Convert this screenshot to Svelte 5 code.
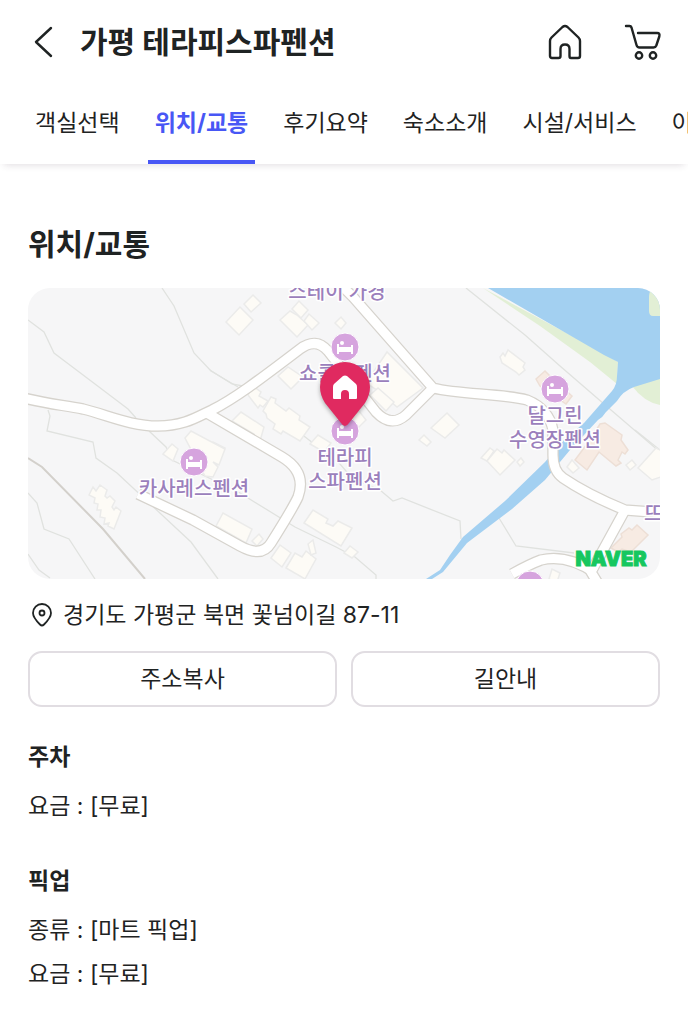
<script lang="ts">
	interface Tab {
		id: string;
		name: string;
	}

	interface Place {
		x: number;
		y: number;
		lines: string[];
	}

	const tabs: Tab[] = [
		{ id: 'rooms', name: '객실선택' },
		{ id: 'location', name: '위치/교통' },
		{ id: 'reviews', name: '후기요약' },
		{ id: 'about', name: '숙소소개' },
		{ id: 'facilities', name: '시설/서비스' },
		{ id: 'guide', name: '이용안내' }
	];

	let active = $state('location');

	const infos = [
		{ title: '주차', rows: ['요금 : [무료]'] },
		{ title: '픽업', rows: ['종류 : [마트 픽업]', '요금 : [무료]'] }
	];

	// map coordinates, see the viewBox of .map
	const places: Place[] = [
		{ x: 345, y: 347, lines: ['쇼콜라펜션'] },
		{ x: 345, y: 431, lines: ['테라피', '스파펜션'] },
		{ x: 555, y: 389, lines: ['달그린', '수영장펜션'] },
		{ x: 194, y: 462, lines: ['카사레스펜션'] },
		{ x: 530, y: 585, lines: [] }
	];

	const roads = [
		'M20 397C42 403 62 405 83 409C108 415 130 426 158 426C184 426 197 417 212 410C234 399 258 381 300 349Q316 337 328 351L376 412Q391 428 406 415L433 388',
		'M207 413L282 457Q307 472 298 497Q293 508 271 543Q262 558 240 546L193 520L138 494',
		'M336 280L353 297L433 388C462 395 500 393 527 400Q549 409 553 430V455Q553 471 563 478Q588 495 625 510L665 513',
		'M625 510L591 572L602 590',
		'M512 574Q530 564 541 560Q567 554 595 573'
	];

	const trails = [
		'M28 320L44 332L54 353L95 384L128 409L136 418',
		'M162 288L174 306L194 353L211 371L238 387',
		'M48 410L50 416L47 431L93 442L96 458L117 473L147 501L191 542L218 579',
		'M28 493L37 503L44 529L69 539L95 579',
		'M28 554L39 570L50 578',
		'M149 431L166 447L172 460L240 493L295 527L336 547L355 557L376 575V579',
		'M210 370L232 384L248 387',
		'M300 433L340 464L352 478L380 490L393 501L402 498L460 521L461 539',
		'M466 288L525 335L560 366L604 404L660 452',
		'M499 518L516 546L574 553',
		'M635 430L660 450'
	];

	const buildings = [
		'M226 322L240 307L253 320L239 335Z',
		'M244 304L253 295L261 303L251 312Z',
		'M280 320L290 311L297 315L308 325L297 337Z',
		'M292 309L299 301L308 310L301 318Z',
		'M304 321L309 314L319 323L312 330Z',
		'M335 323L341 317L346 323L341 329Z',
		'M278 376L288 367L303 377L291 389Z',
		'M366 383L387 352L423 388L397 407L377 390Z',
		'M370 395L378 388L394 402L386 411Z',
		'M350 418L359 411L366 420L358 428Z',
		'M248 395L253 386L261 392L259 396L268 401L263 407L260 405L258 408Z',
		'M263 411L271 397L276 399L275 403L286 411L289 408L300 416L299 420L310 427L300 441L283 431L281 434L273 429L275 424L267 418L266 414Z',
		'M310 444L318 435L331 443L324 452Z',
		'M232 421L241 412L264 427L260 441L253 437L254 434Z',
		'M208 450L213 442L225 448L219 458Z',
		'M431 428L447 413L459 425L445 438Z',
		'M419 440L424 435L431 442L427 446Z',
		'M500 357L503 353L505 356L508 350L525 363L523 367L525 370L519 375L516 372L502 363Z',
		'M185 438L191 431L225 449L219 465L213 462L218 467L213 477L205 476Z',
		'M163 454L172 444L178 449L173 461Z',
		'M89 495L93 487L96 491L100 485L107 490L105 496L107 498L110 496L115 501L112 507L114 510L116 507L121 511L114 529L108 526L109 523L104 524L105 518L100 517L101 510L97 510L98 504L94 503L95 498Z',
		'M216 526L223 513L252 529L246 543Z',
		'M304 523L313 510L328 519L326 523L333 526L338 521L352 528L341 546Z',
		'M252 541L259 534L263 539L257 546Z',
		'M271 558L280 545L291 553L282 567Z',
		'M286 568L295 553L302 557L306 551L316 559L305 579Z',
		'M308 544L313 540L316 553L311 555Z',
		'M344 553L350 546L358 552L352 558Z',
		'M481 458L490 448L494 451L487 461Z',
		'M487 461L497 449L502 453L504 450L515 460L500 475Z',
		'M517 462L521 458L524 462L520 466Z',
		'M567 467L572 460L579 468L573 473Z',
		'M626 465L632 460L636 465L630 470Z',
		'M638 468L656 448L664 452V476L652 480Z',
		'M549 579L552 569L560 573L557 582Z'
	];
</script>

{#snippet bed()}
	<circle r="14" fill="#d6a4de" stroke="#fff" />
	<path d="M-8 -3H-6V0H6V-2H8V7H6V5H-6V7H-8Z" fill="#fff" />
	<circle cx="-3" cy="-4" r="2" fill="#fff" />
{/snippet}

<div class="page">
	<header>
		<div class="bar">
			<button class="icon back" aria-label="뒤로">
				<svg width="20" height="34" viewBox="0 0 20 34">
					<path d="M17 3L2 17L17 31" />
				</svg>
			</button>
			<h1>가평 테라피스파펜션</h1>
			<a class="icon" href="#home" aria-label="홈">
				<svg width="34" height="36" viewBox="0 0 34 36">
					<path
						d="M3.5 13.5L14.5 3Q17 1 19.5 3L30.5 13.5Q32 15 32 17V32Q32 34 30 34H23Q21.5 34 21.5 32V25Q21.5 20.500 17 20.5Q12.5 20.5 12.5 25V32Q12.5 34 10.5 34H4Q2 34 2 32V17Q2 15 3.5 13.5Z"
					/>
				</svg>
			</a>
			<a class="icon" href="#cart" aria-label="장바구니">
				<svg width="38" height="36" viewBox="0 0 38 36">
					<path
						d="M2 2H5.5Q7 2 7.5 3.5L12.5 21Q13.2 23.500 15.5 23.5H29.5Q31.5 23.5 32.3 21.5L35.3 12.5Q36.2 9 33.2 9H14"
					/>
					<circle cx="15" cy="31.500" r="3.2" />
					<circle cx="29" cy="31.500" r="3.2" />
				</svg>
			</a>
		</div>
		<nav>
			{#each tabs as tab}
				<a
					href="#{tab.id}"
					class:active={active === tab.id}
					aria-current={active === tab.id ? 'true' : undefined}
					onclick={() => (active = tab.id)}>{tab.name}</a
				>
			{/each}
		</nav>
	</header>

	<main>
		<h2>위치/교통</h2>

		<svg class="map" viewBox="28 288 632 291" role="img" aria-label="지도">
			<rect x="28" y="288" width="632" height="291" fill="#f6f6f7" />

			<g class="trails">
				{#each trails as d}
					<path {d} />
				{/each}
			</g>
			<path
				d="M28 458L42 467L103 529L145 579"
				fill="none"
				stroke="#d3d0cb"
				stroke-width="2"
			/>

			<g class="buildings">
				{#each buildings as d}
					<path {d} />
				{/each}
			</g>
			<g class="buildings warm">
				<path d="M536 379L545 371L550 376L572 396L566 404L540 386Z" />
				<path
					d="M575 460L590 440L600 424L605 423L622 435L621 440L628 450L625 454L622 452L618 460L621 463L616 466L599 452L587 470Z"
				/>
				<path
					d="M611 548L622 537L621 534L629 528L632 530L637 525L648 535L631 552L622 549L618 552Z"
				/>
			</g>

			<path d="M483 288L598 350L618 362L617 384L590 362L540 326Z" fill="#e2efd5" />
			<path d="M632 386L660 378V405Q644 402 632 386Z" fill="#e2efd5" />
			<path
				d="M488 288H660V379L634 387Q623 391 617 401L606 412Q603 417 598 420L570 450L545 480L512 509L467 543L443 572L432 579H426L440 570L450 555L463 537L505 501L545 462L564 440L584 423L612 391Q617 385 617 376L618 362L604 355Z"
				fill="#a3d0f1"
			/>
			<path d="M653 288H660V316H653Q649 316 649 311V297Q649 291 653 288Z" fill="#e2efd5" />

			<g class="roads casing">
				{#each roads as d}
					<path {d} />
				{/each}
			</g>
			<g class="roads">
				{#each roads as d}
					<path {d} />
				{/each}
			</g>

			<text x="337" y="299">스테이 가경</text>
			<text class="start" x="644" y="521">뜨락</text>
			{#each places as place}
				<g transform="translate({place.x} {place.y})">
					{@render bed()}
					{#each place.lines as line, i}
						<text y={34 + i * 24}>{line}</text>
					{/each}
				</g>
			{/each}

			<g class="pin">
				<path
					d="M345 426Q343 426 341 423L325 403Q320 395 320 387A25 25 0 0 1 370 387Q370 395 365 403L349 423Q347 426 345 426Z"
					fill="#e02a60"
				/>
				<path
					d="M333 387Q333 385 334 384L343 376Q345 375 347 376L356 384Q357 385 357 387V398Q357 399 356 399H349V394Q349 390 345 390Q341 390 341 394V399H334Q333 399 333 398Z"
					fill="#fff"
				/>
			</g>
			<text class="naver" x="611" y="566">NAVER</text>
		</svg>

		<address>
			<svg width="20" height="24" viewBox="0 0 20 24">
				<path
					d="M10 22.5Q9 22.5 8 21.500Q1 14.5 1 10A9 9 0 0 1 19 10Q19 14.5 12 21.5Q11 22.5 10 22.5Z"
				/>
				<circle cx="10" cy="10" r="2.5" />
			</svg>
			경기도 가평군 북면 꽃넘이길 87-11
		</address>

		<div class="actions">
			<button>주소복사</button>
			<button>길안내</button>
		</div>

		{#each infos as info}
			<section>
				<h3>{info.title}</h3>
				{#each info.rows as row}
					<p>{row}</p>
				{/each}
			</section>
		{/each}
	</main>
</div>

<style>
	:global(body) {
		background: #fff;
	}

	.page {
		font-family: Inter, 'Noto Sans CJK KR', sans-serif;
		font-size: 23px;
		color: #1f2323;
		overflow-x: hidden;
	}

	h1,
	h2,
	h3,
	p {
		margin: 0;
	}

	a {
		color: inherit;
		text-decoration: none;
	}

	button {
		font: inherit;
		color: inherit;
		background: none;
		border: none;
		padding: 0;
		cursor: pointer;
	}

	header {
		background: #fff;
		box-shadow: 0 5px 7px -4px rgba(60, 40, 60, 0.16);
	}

	.bar {
		display: flex;
		align-items: center;
		gap: 42px;
		height: 80px;
		padding: 2px 26px 0 34px;
	}
	.icon {
		display: flex;
	}
	.icon svg,
	address svg {
		fill: none;
		stroke: #1f2323;
		stroke-width: 2.4;
		stroke-linecap: round;
		stroke-linejoin: round;
	}
	.back {
		margin-right: -16px;
	}
	h1 {
		flex: 1;
		font-size: 30px;
		line-height: 44px;
		white-space: nowrap;
	}

	nav {
		display: flex;
		gap: 21px;
		padding-left: 28px;
		overflow: hidden;
	}
	nav a {
		flex: none;
		padding: 0 7px;
		line-height: 82px;
		height: 82px;
		box-sizing: border-box;
	}
	nav .active {
		color: #4857f5;
		font-weight: 700;
		border-bottom: 4px solid #4857f5;
	}

	main {
		padding: 58px 28px 28px;
	}
	h2 {
		font-size: 30px;
		line-height: 44px;
		margin-bottom: 22px;
	}

	.map {
		display: block;
		width: 100%;
		border-radius: 22px;
	}
	.trails path {
		fill: none;
		stroke: #e0e2df;
		stroke-width: 1.3;
	}
	.buildings path {
		fill: #fdfbf6;
		stroke: #ebebea;
		stroke-width: 1.5;
	}
	.warm path {
		fill: #f7ebe3;
		stroke: #eddfd6;
	}
	.roads path {
		fill: none;
		stroke: #fff;
		stroke-width: 9;
		stroke-linejoin: round;
	}
	.casing path {
		stroke: #d6d3cd;
		stroke-width: 11.5;
	}
	.map text {
		font-size: 20px;
		font-weight: 500;
		text-anchor: middle;
		fill: #9b7fbc;
		stroke: #fff;
		stroke-width: 3;
		stroke-linejoin: round;
		paint-order: stroke;
	}
	.map .start {
		text-anchor: start;
	}
	.map .naver {
		font-size: 20px;
		font-weight: 900;
		fill: #16c75f;
		stroke: #16c75f;
		stroke-width: 1;
		stroke-linejoin: miter;
	}
	.pin {
		filter: drop-shadow(0 2px 2px rgba(0, 0, 0, 0.3));
	}

	address {
		display: flex;
		align-items: center;
		gap: 11px;
		padding: 20px 4px;
		font-style: normal;
		line-height: 32px;
	}
	address svg {
		flex: none;
		stroke-width: 1.8;
	}

	.actions {
		display: flex;
		gap: 14px;
	}
	.actions button {
		flex: 1;
		height: 56px;
		padding-bottom: 4px;
		border: 2px solid #e1dde2;
		border-radius: 14px;
	}

	section {
		margin-top: 28px;
		line-height: 44px;
	}
	section + section {
		margin-top: 31px;
	}
	h3 {
		font-size: 23px;
		margin-bottom: 5px;
	}
</style>
